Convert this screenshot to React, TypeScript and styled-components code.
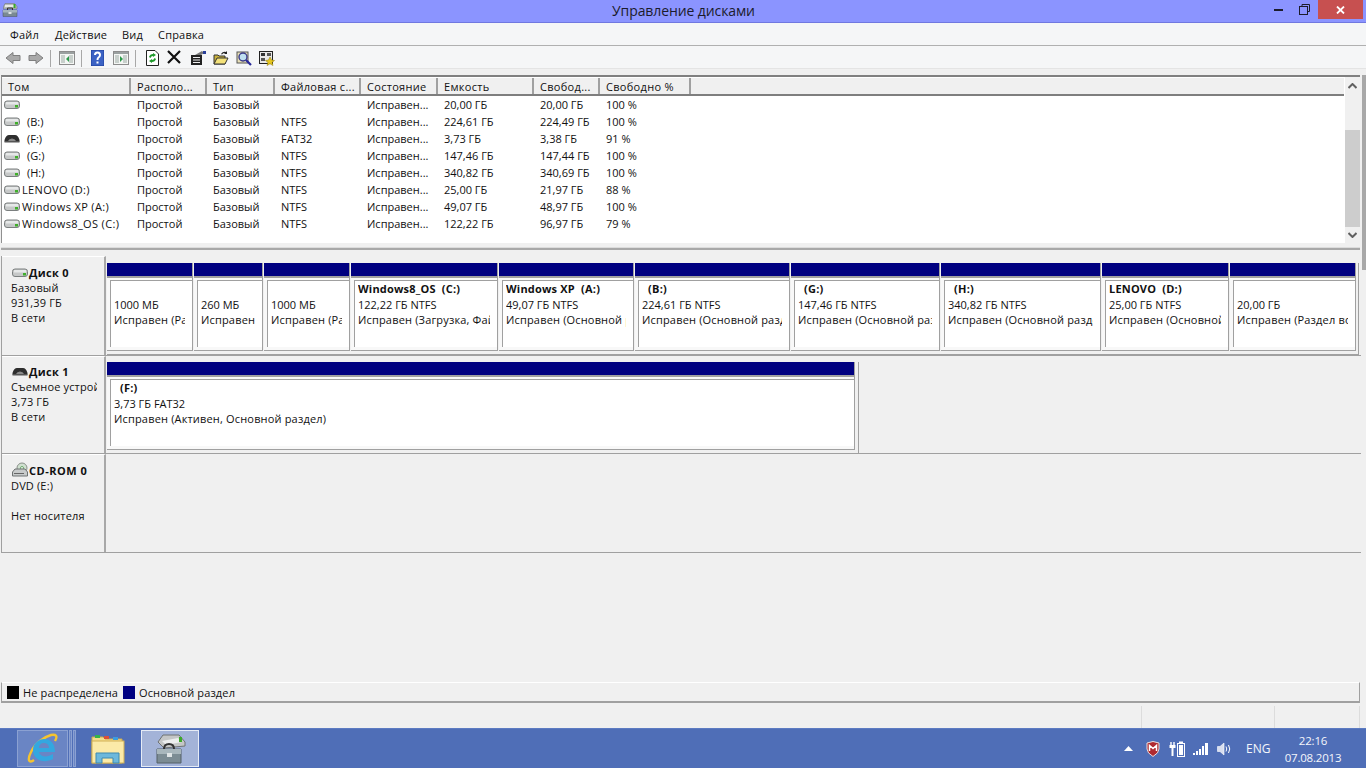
import React from 'react';
import styled, { createGlobalStyle } from 'styled-components';

const Global = createGlobalStyle`
  html, body { margin: 0; padding: 0; width: 100%; height: 100%; overflow: hidden; background: #f0f0f0; }
  * { box-sizing: border-box; }
`;
const FONT = `"Open Sans", "Noto Sans", "Liberation Sans", sans-serif`;
const Page = styled.div`
  width: 1366px; height: 768px; display: flex; flex-direction: column; overflow: hidden;
  font: 11px/15px ${FONT}; color: #111; background: #f0f0f0;
`;
const TitleBar = styled.div`
  height: 23px; flex: none; background: #8b94ff; border-bottom: 1px solid #7078e0;
  display: flex; align-items: flex-start; justify-content: space-between; padding-left: 2px;
`;
const AppIconBox = styled.div`height: 20px; width: 17px; padding-top: 2px;`;
const TitleText = styled.div`
  flex: 1; text-align: center; font-size: 14px; letter-spacing: -0.1px; line-height: 22px; color: #1c1c2c; padding-left: 83px;
`;
const WinButtons = styled.div`display: flex; align-items: flex-start; padding-right: 3px;`;
const WinBtn = styled.div<{ $w: number }>`
  width: ${p => p.$w}px; height: 19px; display: flex; align-items: center; justify-content: center;
`;
const CloseBtn = styled(WinBtn)`background: #c75050;`;
const MenuBar = styled.div`
  height: 23px; flex: none; background: #f5f6f7; border-bottom: 1px solid #b0b0b0;
  display: flex; align-items: center; padding-left: 10px; font-size: 11px; letter-spacing: 0.2px;
`;
const MenuItem = styled.span<{ $w: number }>`width: ${p => p.$w}px; flex: none;`;
const ToolBar = styled.div`
  height: 23px; flex: none; background: #f5f6f7; border-bottom: 1px solid #e4e4e4;
  display: flex; align-items: center; padding: 2px 0 0 5px;
`;
const Tool = styled.div<{ $ml: number }>`
  width: 16px; height: 16px; margin-left: ${p => p.$ml}px; flex: none; display: flex;
`;
const ToolSep = styled.div<{ $ml: number }>`
  width: 1px; height: 17px; margin-left: ${p => p.$ml}px; background: #a8a8a8; flex: none;
`;
const Spacer6 = styled.div`height: 6px; flex: none;`;
const Main = styled.div`flex: none; display: flex; height: 628px;`;
const Content = styled.div`flex: none; width: 1362px; display: flex; flex-direction: column; padding-left: 1px;`;
const RightEdge = styled.div`flex: none; width: 4px;`;
const EdgeStrip = styled.div`height: 195px; background: #a8a8a8;`;

const ListPane = styled.div`
  height: 168px; flex: none; width: 1359px; border-top: 2px solid #808080; border-left: 1px solid #909090;
  display: flex; background: #fff;
`;
const ListBody = styled.div`width: 1342px; flex: none; padding-top: 1px;`;
const HeaderRow = styled.div`
  height: 18px; background: #f0f0f0; border-bottom: 2px solid #7e7e7e; display: flex; letter-spacing: 0.3px;
`;
const COLS = [129, 76, 68, 86, 77, 96, 66, 91];
const HeadCell = styled.div<{ $w: number }>`
  width: ${p => p.$w}px; flex: none; padding-left: 6px; border-right: 2px solid #a0a0a0;
  line-height: 17px; white-space: nowrap; overflow: hidden;
`;
const Row = styled.div`height: 17px; display: flex; line-height: 17px;`;
const Cell = styled.div<{ $w: number }>`
  width: ${p => p.$w}px; flex: none; padding-left: 6px; white-space: nowrap; overflow: hidden;
`;
const NameCell = styled.div`
  width: 129px; flex: none; display: flex; align-items: center; padding-left: 2px; white-space: nowrap;
`;
const NameText = styled.span<{ $gap: number; $ls: number }>`margin-left: ${p => p.$gap}px; letter-spacing: ${p => p.$ls}px;`;
const Scroll = styled.div`
  width: 15px; margin-left: 1px; flex: none; background: #f0f0f0; display: flex; flex-direction: column;
  align-items: stretch; height: 166px;
`;
const ScrollBtn = styled.div`height: 53px; display: flex; justify-content: center; padding-top: 6px;`;
const ScrollBtnB = styled(ScrollBtn)`height: 16px; padding-top: 5px;`;
const Thumb = styled.div`height: 97px; background: #cdcdcd;`;

const Divider = styled.div`
  height: 13px; flex: none; width: 1359px; display: flex; flex-direction: column;
`;
const DivWhite = styled.div`height: 4px; background: #f0f0f0;`;
const DivBand = styled.div`height: 3px; background: #a8a8a8; border-top: 1px solid #dcdcdc;`;

const DiskRow = styled.div<{ $h: number }>`
  height: ${p => p.$h}px; flex: none; width: 1360px; display: flex; border-bottom: 1px solid #a0a0a0;
  border-left: 1px solid #a0a0a0;
`;
const DiskLabel = styled.div<{ $pt: number }>`
  width: 104px; flex: none; border-right: 2px solid #a8a8a8; border-top: 1px solid #fff;
  padding: ${p => p.$pt}px 0 0 9px; background: #f0f0f0; overflow: hidden; white-space: nowrap;
`;
const LabelTitle = styled.div`display: flex; align-items: center; font-weight: 700; height: 16px; margin-left: 1px;`;
const LabelTitleText = styled.span<{ $ls: number }>`margin-left: 1px; letter-spacing: ${p => p.$ls}px;`;
const LabelLine = styled.div`height: 15px; width: 86px; overflow: hidden; letter-spacing: 0.15px;`;
const DiskArea = styled.div<{ $pt: number }>`
  flex: 1; padding: ${p => p.$pt}px 0 0 1px; display: flex; align-items: flex-start;
`;
const Frame = styled.div<{ $pr: number }>`
  display: flex; padding-bottom: 3px; border-bottom: 1px solid #a0a0a0; border-right: 1px solid #a0a0a0;
  padding-right: ${p => p.$pr}px;
`;
const Partition = styled.div<{ $w: number }>`
  width: ${p => p.$w - 1}px; margin-right: 1px; flex: none; height: 88px; background: #f8f8f8;
  display: flex; flex-direction: column; border-right: 1px solid #a0a0a0; border-bottom: 1px solid #a0a0a0;
`;
const Bar = styled.div`height: 15px; flex: none; background: #000080; border-bottom: 2px solid #a0a0a0;`;
const Inner = styled.div`
  flex: 1; margin: 2px 0 3px 3px; background: #fff; border-left: 1px solid #a0a0a0; border-top: 1px solid #a0a0a0;
  padding: 0 7px 0 3px; overflow: hidden; white-space: nowrap;
`;
const Line = styled.div<{ $ls?: number }>`height: 15px; overflow: hidden; letter-spacing: ${p => p.$ls ?? 0}px;`;
const NameLine = styled.div`height: 16px; font-weight: 700; line-height: 16px; overflow: hidden; white-space: pre; letter-spacing: 0.2px;`;
const LegendBox = styled.div`
  height: 21px; flex: none; width: 1359px; background: #f0f0f0; border: 1px solid #a0a0a0; border-top-color: #fff;
  border-bottom-width: 2px; display: flex; align-items: center; padding-left: 5px; letter-spacing: 0.13px;
`;
const Swatch = styled.div<{ $c: string }>`width: 12px; height: 13px; background: ${p => p.$c}; margin-right: 4px; flex: none;`;
const LegendText = styled.span<{ $w: number }>`width: ${p => p.$w}px; flex: none;`;
const FlexFill = styled.div`flex: 1;`;
const StatusBar = styled.div`
  height: 25px; flex: none; display: flex; background: #f0f0f0; padding-top: 3px;
`;
const StatusCell = styled.div<{ $w: number }>`width: ${p => p.$w}px; flex: none; border-right: 1px solid #dcdcdc;`;
const Taskbar = styled.div`
  height: 40px; flex: none; background: #4f6eb7; border-top: 1px solid #5c7bc2; display: flex; align-items: stretch;
  color: #fff;
`;
const TaskBtn = styled.div<{ $w: number; $ml: number; $active?: boolean }>`
  width: ${p => p.$w}px; margin: 1px 0 1px ${p => p.$ml}px; flex: none; display: flex; align-items: center; justify-content: center;
  background: ${p => (p.$active ? '#a3b3d8' : 'transparent')};
  border: ${p => (p.$active ? '1px solid #e6ecf6' : 'none')};
`;
const IeBtn = styled(TaskBtn)`background: #6a85c4; border: 1px solid #8ba1d2;`;
const IeStrip = styled.div<{ $ml: number }>`width: 3px; margin: 1px 0 1px ${p => p.$ml}px; flex: none; background: #6a85c4; border: 1px solid #8ba1d2;`;
const Tray = styled.div`margin-left: auto; display: flex; align-items: center; padding-right: 26px;`;
const TrayIcon = styled.div<{ $w: number; $ml: number }>`width: ${p => p.$w}px; margin-left: ${p => p.$ml}px; height: 18px; display: flex; align-items: center; justify-content: center;`;
const Lang = styled.div`margin-left: 14px; font-size: 12px; color: #f4f6fb; width: 24px;`;
const Clock = styled.div`margin-left: 16px; text-align: center; font-size: 11.5px; letter-spacing: -0.2px; line-height: 17px; color: #f4f6fb; width: 54px; white-space: nowrap; display: flex; flex-direction: column; align-items: center;`;

const DriveIcon = ({ dark }: { dark?: boolean }) => dark ? (
  <svg width="16" height="9" viewBox="0 0 16 9" style={{ flex: 'none' }}>
    <path d="M0.5 6 Q2 1 5 1 H11 Q14 1 15.5 6 V7.5 H0.5Z" fill="#2e2e2e" />
    <path d="M4 7 Q5 4.5 8 4.5 Q11 4.5 12 7Z" fill="#8a8a8a" />
    <rect x="0.5" y="7" width="15" height="1.5" fill="#555" />
  </svg>
) : (
  <svg width="16" height="9" viewBox="0 0 16 9" style={{ flex: 'none' }}>
    <rect x="0.5" y="1" width="15" height="7.5" rx="2.5" fill="#c6c8c8" stroke="#7b7f7f" />
    <rect x="2" y="2" width="12" height="2.5" fill="#e6e8e8" />
    <rect x="11" y="5" width="3" height="2.5" fill="#3fae2a" />
  </svg>
);
const CdIcon = () => (
  <svg width="16" height="16" viewBox="0 0 16 16" style={{ flex: 'none' }}>
    <circle cx="10" cy="6" r="5" fill="#cfe0cf" stroke="#8a8f8a" />
    <circle cx="10" cy="6" r="1.5" fill="#fff" stroke="#6aa86a" />
    <path d="M0.5 10 L3 7 H13 L15.5 10 V14 H0.5Z" fill="#c8cbcb" stroke="#6e7272" />
    <rect x="2" y="11" width="10" height="1" fill="#666" />
  </svg>
);

const Back = ({ flip }: { flip?: boolean }) => (
  <svg width="16" height="16" viewBox="0 0 16 16" style={flip ? { transform: 'scaleX(-1)' } : undefined}>
    <path d="M1 8 L8 2.5 V5.5 H15 V10.5 H8 V13.5Z" fill="#a9a9a9" stroke="#7f7f7f" />
  </svg>
);
const Pane = ({ right }: { right?: boolean }) => (
  <svg width="16" height="16" viewBox="0 0 16 16">
    <rect x="0.5" y="1.5" width="15" height="13" fill="#f4f6f4" stroke="#8c8c8c" />
    <rect x="1" y="2" width="14" height="2" fill="#9aa0a0" />
    <rect x="2" y="5" width="4" height="8" fill="#c8d0cc" />
    <rect x="10" y="5" width="4" height="8" fill="#c8d0cc" />
    <path d={right ? 'M7 6 L10 9 L7 12Z' : 'M10 6 L7 9 L10 12Z'} fill="#2c9a4a" />
  </svg>
);
const Help = () => (
  <svg width="13" height="16" viewBox="0 0 13 16">
    <rect x="0" y="0" width="13" height="16" fill="#3b62c4" stroke="#1f3f9a" />
    <path d="M4 5 Q4 2.5 6.5 2.5 Q9 2.5 9 5 Q9 6.5 7.5 7.5 Q6.5 8.2 6.5 10" fill="none" stroke="#fff" strokeWidth="2" />
    <rect x="5.5" y="11.5" width="2" height="2" fill="#fff" />
  </svg>
);
const Refresh = () => (
  <svg width="13" height="16" viewBox="0 0 13 16">
    <path d="M0.5 0.5 H9 L12.5 4 V15.5 H0.5Z" fill="#fff" stroke="#222" />
    <path d="M3 7 Q4 4 7 4 L7 3 L10 5 L7 7 V6 Q5 6 4.5 8Z M10 9 Q9 12 6 12 L6 13 L3 11 L6 9 V10 Q8 10 8.5 8Z" fill="#1f9a2c" />
  </svg>
);
const Cross = () => (
  <svg width="14" height="14" viewBox="0 0 14 14"><path d="M1 1 L13 13 M13 1 L1 13" stroke="#111" strokeWidth="2.2" /></svg>
);
const Props = () => (
  <svg width="16" height="16" viewBox="0 0 16 16">
    <path d="M1 5 H12 V15 H1Z" fill="#222" />
    <path d="M3 7.5 H10 M3 10 H10 M3 12.5 H10" stroke="#eee" />
    <path d="M5 5 L12 1 L14 3 L11 5Z" fill="#777" />
    <rect x="13" y="1" width="3" height="3" fill="#2a3f9a" />
  </svg>
);
const OpenFolder = () => (
  <svg width="16" height="16" viewBox="0 0 16 16">
    <path d="M1 5 H5 L6 6 H12 V14 H1Z" fill="#c9b23c" stroke="#333" />
    <path d="M1 14 L4 8 H15 L12 14Z" fill="#f4e27a" stroke="#333" />
    <path d="M8 4 Q10 1 13 2 L14 1 V4 H11 L12 3 Q10 2.5 9 4.5" fill="#222" />
  </svg>
);
const Search = () => (
  <svg width="16" height="16" viewBox="0 0 16 16">
    <rect x="1" y="2" width="11" height="11" fill="#e8e0b8" stroke="#555" />
    <circle cx="7" cy="7" r="4" fill="#bfe0f0" stroke="#3a3a8a" strokeWidth="1.4" />
    <path d="M10 10 L15 15" stroke="#2a2a9a" strokeWidth="2.2" />
  </svg>
);
const Wizard = () => (
  <svg width="16" height="16" viewBox="0 0 16 16">
    <rect x="0.5" y="1.5" width="13" height="12" fill="#e8e8e8" stroke="#222" />
    <rect x="2" y="3" width="4" height="3" fill="#333" /><rect x="8" y="3" width="4" height="3" fill="#555" />
    <rect x="2" y="8" width="4" height="3" fill="#555" />
    <path d="M11 7 L12.5 10 L15.5 10.5 L13 12.5 L14 15.5 L11 13.8 L8 15.5 L9 12.5 L6.5 10.5 L9.5 10Z" fill="#e8c820" stroke="#8a7400" strokeWidth="0.5" />
  </svg>
);
const AppIcon = () => (
  <svg width="16" height="16" viewBox="0 0 32 32">
    <path d="M6 3 H25 L30 9 V14 H3 V9Z" fill="#b4b8b8" stroke="#6a6e6e" />
    <rect x="6" y="6" width="18" height="4" fill="#e6e8e8" />
    <rect x="23" y="4" width="4" height="8" fill="#3caa2a" />
    <path d="M2 16 H30 V29 H2Z" fill="#7a8a92" stroke="#485258" />
    <rect x="2" y="16" width="28" height="5" fill="#a6b4ba" />
    <path d="M11 16 V12 H21 V16" fill="none" stroke="#333" strokeWidth="2" />
    <rect x="13" y="20" width="6" height="4" fill="#dfe4e6" />
  </svg>
);
const IeIcon = () => (
  <svg width="32" height="32" viewBox="0 0 32 32">
    <path d="M7 27 C2 31 0 27 4 19 C8 10 17 4 24 2 C29 1 31 3 28 8" fill="none" stroke="#f5c430" strokeWidth="2.4" />
    <path d="M6 17 C6 10 12 6 17 6 C24 6 28 11 28 19 H12 C13 24 20 25 26 21 V26 C17 31 6 27 6 17 Z M12 15 H22 C22 11 19 10 17 10 C14 10 12 12 12 15Z" fill="#33a7e0" />
  </svg>
);
const FolderIcon = () => (
  <svg width="34" height="32" viewBox="0 0 34 32">
    <path d="M1 4 H12 L14 6 H31 V30 H1Z" fill="#f4dd8a" stroke="#c9a84a" />
    <rect x="4" y="2" width="5" height="3" fill="#35b34a" />
    <rect x="13" y="3" width="5" height="3" fill="#d94f3a" />
    <rect x="22" y="4" width="5" height="3" fill="#3a9ce0" />
    <rect x="1" y="8" width="32" height="22" fill="#fbeaa8" stroke="#d1b054" />
    <path d="M5 30 V20 H28 V30 H22 V25 H11 V30Z" fill="#6cb8dc" stroke="#3f8ab0" />
  </svg>
);
const ToolsIcon = () => (
  <svg width="32" height="32" viewBox="0 0 32 32">
    <path d="M9 2 H25 L31 9 V13 L10 15 L4 9Z" fill="#c4c6c6" stroke="#6e7272" />
    <path d="M8 8 L24 5 L28 9 L12 12Z" fill="#eceeee" />
    <rect x="25" y="4" width="3" height="5" fill="#3caa2a" />
    <path d="M3 16 H27 V30 H3Z" fill="#7c8c94" stroke="#556066" />
    <rect x="3" y="16" width="24" height="5" fill="#a8b6bc" />
    <path d="M10 16 Q10 11 15 11 Q20 11 20 16" fill="none" stroke="#333" strokeWidth="2" />
    <rect x="13" y="20" width="5" height="4" fill="#dfe4e6" />
  </svg>
);
const Shield = () => (
  <svg width="14" height="16" viewBox="0 0 14 16">
    <path d="M1 2 L7 0.5 L13 2 V8 Q13 12 7 15.5 Q1 12 1 8Z" fill="#b02a30" stroke="#e8e0e0" />
    <path d="M3.5 10 V4.5 L7 7.5 L10.5 4.5 V10" fill="none" stroke="#fff" strokeWidth="1.5" />
  </svg>
);
const Power = () => (
  <svg width="16" height="16" viewBox="0 0 16 16" fill="#fff">
    <path d="M2 1 V4 M5 1 V4" stroke="#fff" strokeWidth="1.4" />
    <rect x="0.5" y="4" width="6" height="3" /><rect x="2.5" y="7" width="2" height="8" />
    <rect x="8.5" y="2.5" width="7" height="13" fill="none" stroke="#fff" />
    <rect x="10" y="0.5" width="4" height="2" /><rect x="10" y="4" width="4" height="10" />
  </svg>
);
const Signal = () => (
  <svg width="16" height="12" viewBox="0 0 16 12" fill="#fff">
    <rect x="0" y="10" width="2" height="2" /><rect x="3" y="8" width="2" height="4" /><rect x="6" y="6" width="2" height="6" />
    <rect x="9" y="3" width="2" height="9" /><rect x="12" y="0" width="3" height="12" />
  </svg>
);
const Speaker = () => (
  <svg width="15" height="14" viewBox="0 0 15 14">
    <path d="M0.5 4.5 H3 L7 1 V13 L3 9.5 H0.5Z" fill="#d8deef" stroke="#fff" strokeWidth="0.6" />
    <path d="M9 4.5 Q10.5 7 9 9.5 M11.5 3 Q14 7 11.5 11" fill="none" stroke="#fff" />
  </svg>
);

const rows = [
  ['', 0, 'Простой', 'Базовый', '', 'Исправен...', '20,00 ГБ', '20,00 ГБ', '100 %'],
  ['(B:)', 7, 'Простой', 'Базовый', 'NTFS', 'Исправен...', '224,61 ГБ', '224,49 ГБ', '100 %'],
  ['(F:)', 7, 'Простой', 'Базовый', 'FAT32', 'Исправен...', '3,73 ГБ', '3,38 ГБ', '91 %'],
  ['(G:)', 7, 'Простой', 'Базовый', 'NTFS', 'Исправен...', '147,46 ГБ', '147,44 ГБ', '100 %'],
  ['(H:)', 7, 'Простой', 'Базовый', 'NTFS', 'Исправен...', '340,82 ГБ', '340,69 ГБ', '100 %'],
  ['LENOVO (D:)', 2, 'Простой', 'Базовый', 'NTFS', 'Исправен...', '25,00 ГБ', '21,97 ГБ', '88 %'],
  ['Windows XP (A:)', 2, 'Простой', 'Базовый', 'NTFS', 'Исправен...', '49,07 ГБ', '48,97 ГБ', '100 %'],
  ['Windows8_OS (C:)', 2, 'Простой', 'Базовый', 'NTFS', 'Исправен...', '122,22 ГБ', '96,97 ГБ', '79 %'],
] as const;
const headers = ['Том', 'Располо...', 'Тип', 'Файловая с...', 'Состояние', 'Емкость', 'Свобод...', 'Свободно %'];

const parts = [
  { w: 87, name: '', size: '1000 МБ', st: 'Исправен (Раздел восстановления)' },
  { w: 70, name: '', size: '260 МБ', st: 'Исправен (Шифрованный)' },
  { w: 87, name: '', size: '1000 МБ', st: 'Исправен (Раздел восстановления)' },
  { w: 148, name: 'Windows8_OS  (C:)', size: '122,22 ГБ NTFS', st: 'Исправен (Загрузка, Файл подкачки)' },
  { w: 136, name: 'Windows XP  (A:)', size: '49,07 ГБ NTFS', st: 'Исправен (Основной раздел)' },
  { w: 156, name: '  (B:)', size: '224,61 ГБ NTFS', st: 'Исправен (Основной раздел)' },
  { w: 150, name: '  (G:)', size: '147,46 ГБ NTFS', st: 'Исправен (Основной раздел)' },
  { w: 161, name: '  (H:)', size: '340,82 ГБ NTFS', st: 'Исправен (Основной раздел)' },
  { w: 128, name: 'LENOVO  (D:)', size: '25,00 ГБ NTFS', st: 'Исправен (Основной раздел)' },
  { w: 127, name: '', size: '20,00 ГБ', st: 'Исправен (Раздел восстановления)' },
];

const PartitionView = ({ w, name, size, st }: { w: number; name: string; size: string; st: string }) => (
  <Partition $w={w}>
    <Bar />
    <Inner>
      <NameLine>{name}</NameLine>
      <Line>{size}</Line>
      <Line $ls={0.17}>{st}</Line>
    </Inner>
  </Partition>
);

export default function App() {
  return (
    <Page>
      <Global />
      <TitleBar>
        <AppIconBox><AppIcon /></AppIconBox>
        <TitleText>Управление дисками</TitleText>
        <WinButtons>
          <WinBtn $w={26}><svg width="9" height="3"><rect width="9" height="2" y="1" fill="#1c1c2c" /></svg></WinBtn>
          <WinBtn $w={27}>
            <svg width="11" height="11" viewBox="0 0 11 11"><path d="M3 2.5 V0.5 H10.5 V7.5 H8.5" fill="none" stroke="#1c1c2c" /><rect x="0.5" y="2.5" width="8" height="8" fill="none" stroke="#1c1c2c" strokeWidth="1" /></svg>
          </WinBtn>
          <CloseBtn $w={45}>
            <svg width="9" height="8" viewBox="0 0 9 8"><path d="M1 0.5 L8 7.5 M8 0.5 L1 7.5" stroke="#fff" strokeWidth="1.8" /></svg>
          </CloseBtn>
        </WinButtons>
      </TitleBar>
      <MenuBar>
        <MenuItem $w={45}>Файл</MenuItem>
        <MenuItem $w={67}>Действие</MenuItem>
        <MenuItem $w={36}>Вид</MenuItem>
        <MenuItem $w={60}>Справка</MenuItem>
      </MenuBar>
      <ToolBar>
        <Tool $ml={0}><Back /></Tool>
        <Tool $ml={7}><Back flip /></Tool>
        <ToolSep $ml={6} />
        <Tool $ml={8}><Pane /></Tool>
        <ToolSep $ml={6} />
        <Tool $ml={9}><Help /></Tool>
        <Tool $ml={6}><Pane right /></Tool>
        <ToolSep $ml={6} />
        <Tool $ml={10}><Refresh /></Tool>
        <Tool $ml={5}><Cross /></Tool>
        <Tool $ml={7}><Props /></Tool>
        <Tool $ml={7}><OpenFolder /></Tool>
        <Tool $ml={7}><Search /></Tool>
        <Tool $ml={7}><Wizard /></Tool>
      </ToolBar>
      <Spacer6 />
      <Main>
        <Content>
          <ListPane>
            <ListBody>
              <HeaderRow>
                {headers.map((h, i) => <HeadCell key={h} $w={COLS[i]}>{h}</HeadCell>)}
              </HeaderRow>
              {rows.map((r, i) => (
                <Row key={i}>
                  <NameCell><DriveIcon dark={r[0] === '(F:)'} /><NameText $gap={r[1]} $ls={r[1] === 2 ? 0.35 : 0}>{r[0]}</NameText></NameCell>
                  {r.slice(2).map((c, j) => <Cell key={j} $w={COLS[j + 1]}>{c}</Cell>)}
                </Row>
              ))}
            </ListBody>
            <Scroll>
              <ScrollBtn><svg width="9" height="6" viewBox="0 0 9 6"><path d="M0.5 5 L4.5 1 L8.5 5" fill="none" stroke="#606060" strokeWidth="2" /></svg></ScrollBtn>
              <Thumb />
              <ScrollBtnB><svg width="9" height="6" viewBox="0 0 9 6"><path d="M0.5 1 L4.5 5 L8.5 1" fill="none" stroke="#606060" strokeWidth="2" /></svg></ScrollBtnB>
            </Scroll>
          </ListPane>
          <Divider>
            <DivWhite />
            <DivBand />
          </Divider>
          <DiskRow $h={100}>
            <DiskLabel $pt={7}>
              <LabelTitle><DriveIcon /><LabelTitleText $ls={0.3}>Диск 0</LabelTitleText></LabelTitle>
              <LabelLine>Базовый</LabelLine>
              <LabelLine>931,39 ГБ</LabelLine>
              <LabelLine>В сети</LabelLine>
            </DiskLabel>
            <DiskArea $pt={7}>
              <Frame $pr={1}>
                {parts.map((p, i) => <PartitionView key={i} {...p} />)}
              </Frame>
            </DiskArea>
          </DiskRow>
          <DiskRow $h={98}>
            <DiskLabel $pt={6}>
              <LabelTitle><DriveIcon dark /><LabelTitleText $ls={0.3}>Диск 1</LabelTitleText></LabelTitle>
              <LabelLine>Съемное устройство</LabelLine>
              <LabelLine>3,73 ГБ</LabelLine>
              <LabelLine>В сети</LabelLine>
            </DiskLabel>
            <DiskArea $pt={6}>
              <Frame $pr={2}>
                <PartitionView w={749} name="  (F:)" size="3,73 ГБ FAT32" st="Исправен (Активен, Основной раздел)" />
              </Frame>
            </DiskArea>
          </DiskRow>
          <DiskRow $h={99}>
            <DiskLabel $pt={7}>
              <LabelTitle><CdIcon /><LabelTitleText $ls={0.5}>CD-ROM 0</LabelTitleText></LabelTitle>
              <LabelLine>DVD (E:)</LabelLine>
              <LabelLine />
              <LabelLine>Нет носителя</LabelLine>
            </DiskLabel>
            <DiskArea $pt={0} />
          </DiskRow>
          <FlexFill />
          <LegendBox>
            <Swatch $c="#000" /><LegendText $w={100}>Не распределена</LegendText>
            <Swatch $c="#000080" /><LegendText $w={120}>Основной раздел</LegendText>
          </LegendBox>
        </Content>
        <RightEdge><EdgeStrip /></RightEdge>
      </Main>
      <StatusBar>
        <StatusCell $w={1142} /><StatusCell $w={133} /><StatusCell $w={85} />
      </StatusBar>
      <Taskbar>
        <IeBtn $w={51} $ml={17}><IeIcon /></IeBtn>
        <IeStrip $ml={1} /><IeStrip $ml={1} />
        <TaskBtn $w={59} $ml={2}><FolderIcon /></TaskBtn>
        <TaskBtn $w={58} $ml={4} $active><ToolsIcon /></TaskBtn>
        <Tray>
          <TrayIcon $w={10} $ml={0}><svg width="9" height="5"><path d="M0 5 L4.5 0 L9 5Z" fill="#fff" /></svg></TrayIcon>
          <TrayIcon $w={14} $ml={13}><Shield /></TrayIcon>
          <TrayIcon $w={16} $ml={9}><Power /></TrayIcon>
          <TrayIcon $w={16} $ml={8}><Signal /></TrayIcon>
          <TrayIcon $w={15} $ml={8}><Speaker /></TrayIcon>
          <Lang>ENG</Lang>
          <Clock><span>22:16</span><span>07.08.2013</span></Clock>
        </Tray>
      </Taskbar>
    </Page>
  );
}
